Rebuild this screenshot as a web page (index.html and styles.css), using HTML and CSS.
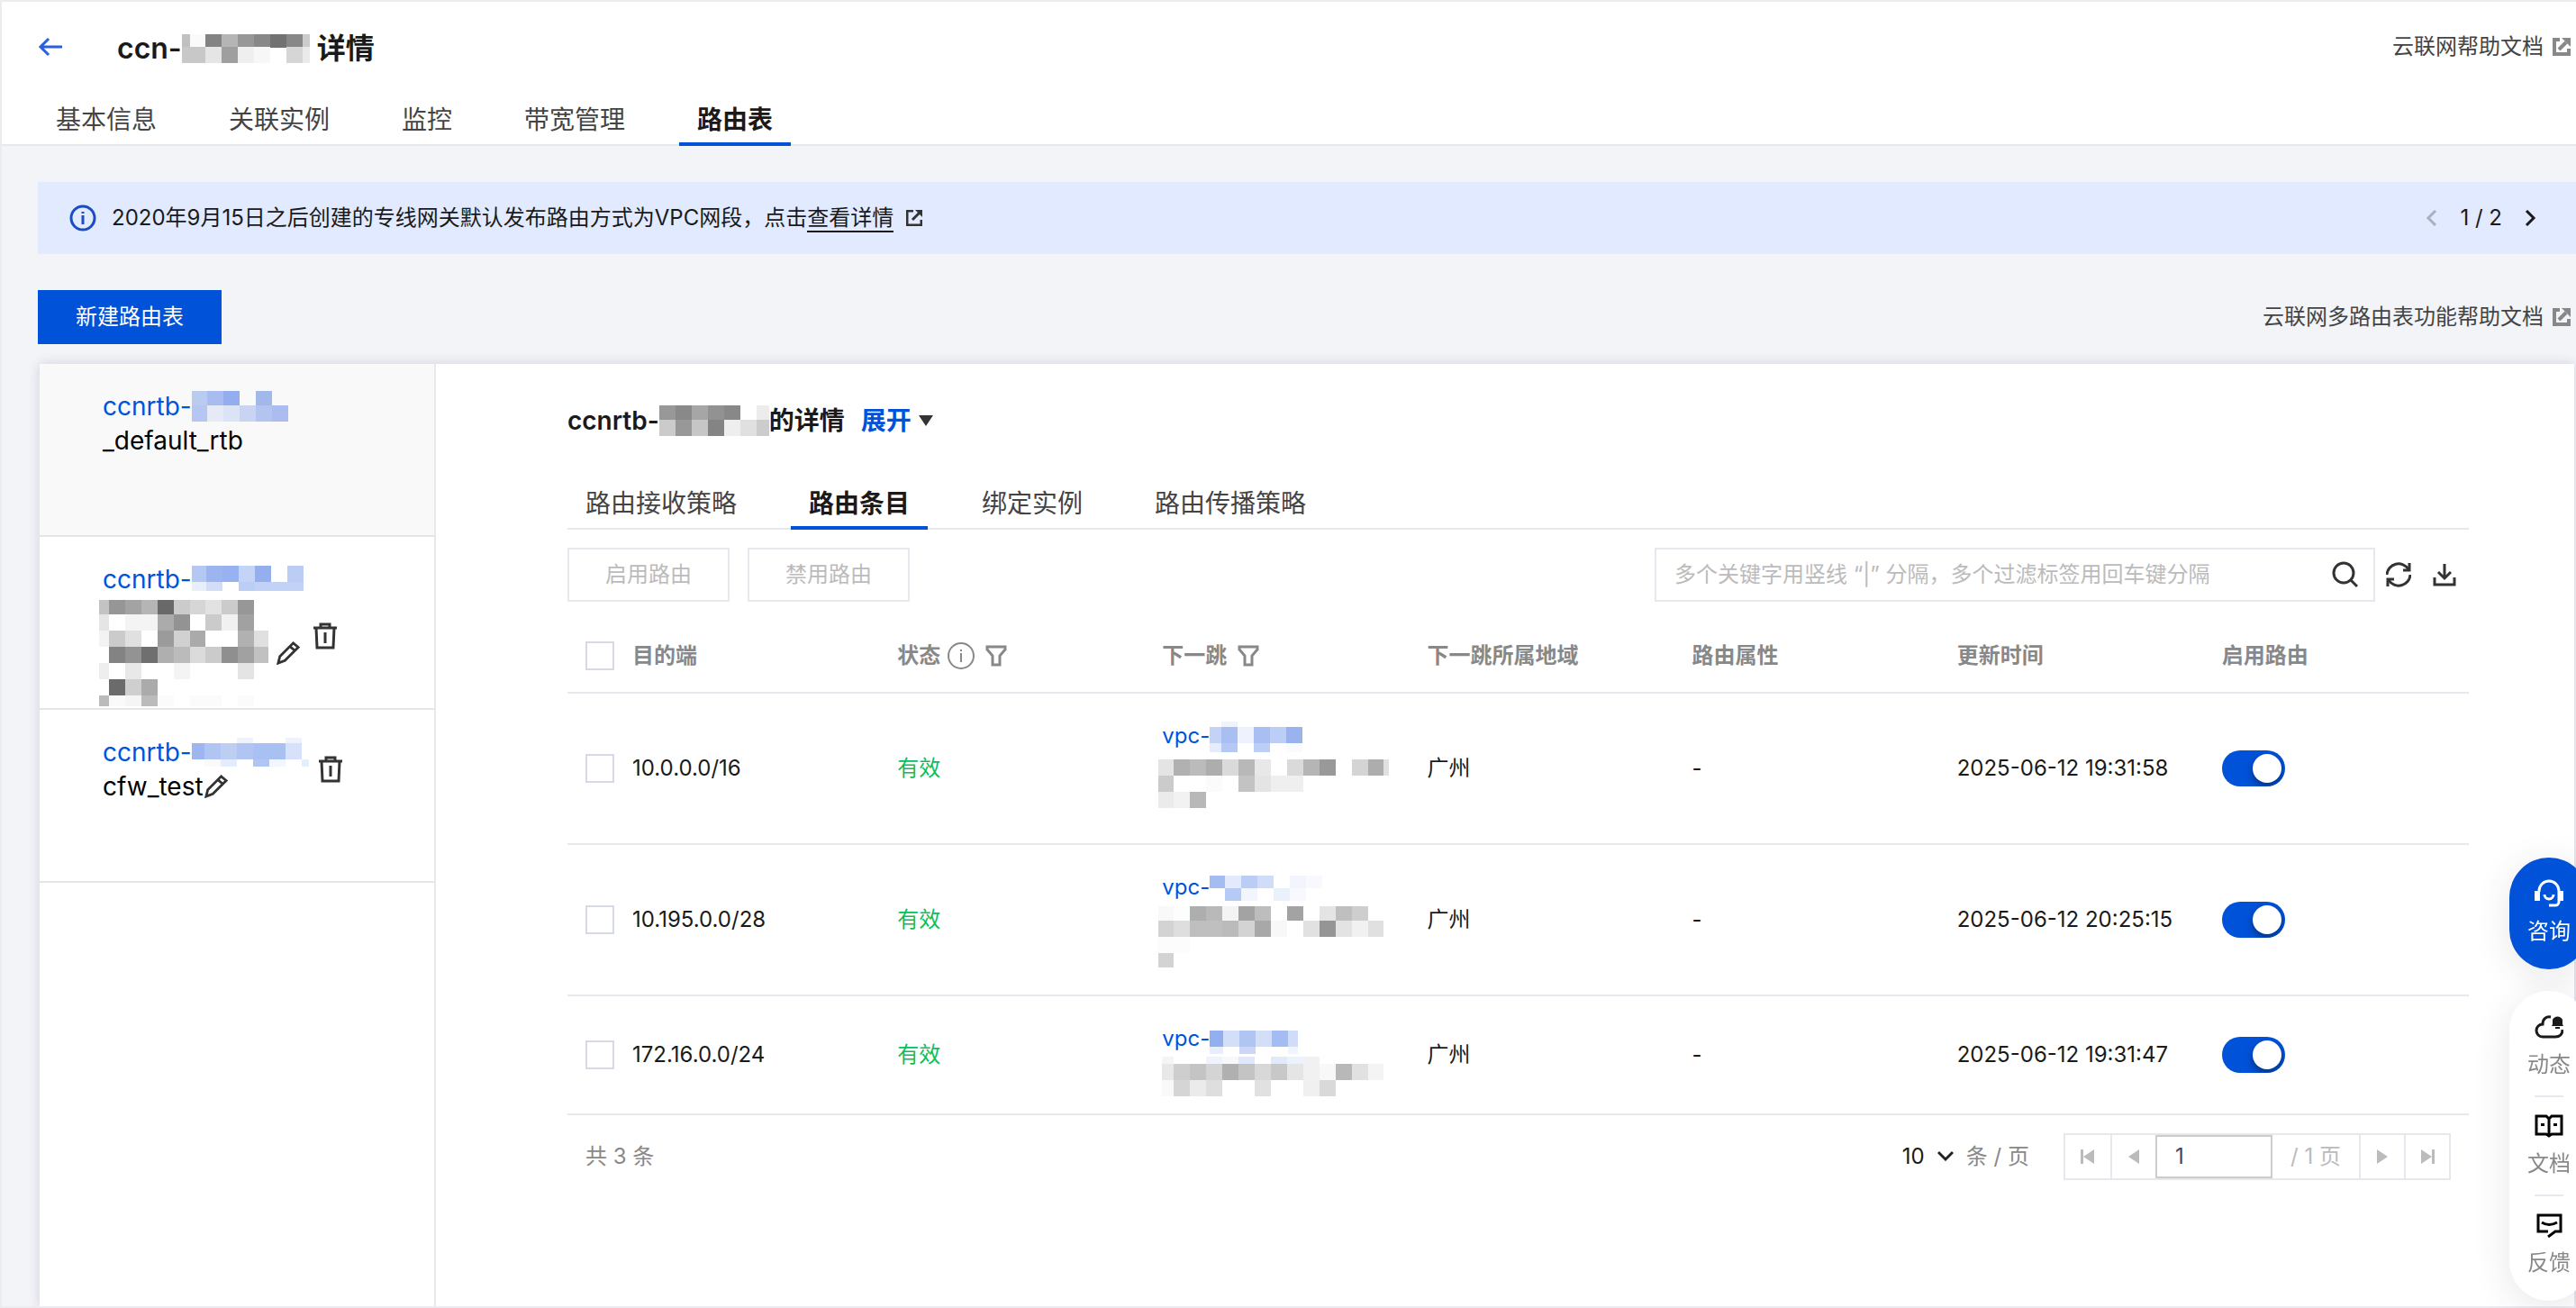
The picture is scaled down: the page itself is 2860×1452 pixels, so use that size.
FILE: index.html
```html
<!DOCTYPE html>
<html lang="zh-CN">
<head>
    <meta charset="UTF-8">
    <meta name="viewport" content="width=device-width, initial-scale=1.0">
    <title>云联网 - 路由表</title>
    <link rel="stylesheet" href="styles.css">
</head>
<body>
    <!-- Shared icons -->
    <svg class="sprite" aria-hidden="true">
        <symbol id="icon-external" viewBox="0 0 20 20">
            <path d="M8 2H2v16h16v-6" fill="none" stroke="currentColor" stroke-width="4"/>
            <path d="M7 13l8-8" fill="none" stroke="currentColor" stroke-width="4"/>
            <path d="M10 0h10v10z" fill="currentColor"/>
        </symbol>
        <symbol id="icon-filter" viewBox="0 0 24 24">
            <path d="M2 2h20v3l-6 7v10H8V12L2 5z" fill="none" stroke="currentColor" stroke-width="3"/>
        </symbol>
        <symbol id="icon-edit" viewBox="0 0 28 28">
            <path d="M2 26l2-8L20 2l6 5L10 23zM16 6l6 5" fill="none" stroke="currentColor" stroke-width="3"/>
        </symbol>
        <symbol id="icon-delete" viewBox="0 0 28 30">
            <path d="M1 6h26M9 6V2h10v4M4 6l1 22h18l1-22M14 11v12" fill="none" stroke="currentColor" stroke-width="3"/>
        </symbol>
    </svg>

    <header class="header">
        <div class="header-top">
            <a class="back" href="#" aria-label="返回">
                <svg width="28" height="22" viewBox="0 0 28 22"><path d="M27 11H3M12 2l-9 9 9 9" fill="none" stroke="currentColor" stroke-width="3"/></svg>
            </a>
            <h1>ccn-<svg class="mosaic" width="142" height="34">
                <g stroke-width="15"><path stroke="#c0c0c0" d="M0 8h9"/><path stroke="#fafafa" d="M9 8h17"/><path stroke="#838383" d="M26 8h18"/><path stroke="#b5b5b5" d="M44 8h18"/><path stroke="#979797" d="M62 8h18"/><path stroke="#888" d="M80 8h18"/><path stroke="#727272" d="M98 8h18"/><path stroke="#888" d="M116 8h18"/><path stroke="#ccc" d="M134 8h8"/></g>
                <g stroke-width="18"><path stroke="#c8c8c8" d="M0 24h26"/><path stroke="#e5e5e5" d="M26 24h18"/><path stroke="#9f9f9f" d="M44 24h18"/><path stroke="#efefef" d="M62 24h18"/><path stroke="#f7f7f7" d="M80 24h18"/><path stroke="#d6d6d6" d="M116 24h18"/><path stroke="#eaeaea" d="M134 24h8"/></g>
            </svg> 详情</h1>
            <a class="help-link" href="#">云联网帮助文档<svg width="20" height="20"><use href="#icon-external"/></svg></a>
        </div>
        <nav class="tabs">
            <a class="tab" href="#">基本信息</a>
            <a class="tab" href="#">关联实例</a>
            <a class="tab" href="#">监控</a>
            <a class="tab" href="#">带宽管理</a>
            <a class="tab active" href="#">路由表</a>
        </nav>
    </header>

    <main class="content">
        <div class="alert">
            <svg class="alert-icon" width="30" height="30" viewBox="0 0 30 30"><circle cx="15" cy="15" r="13" fill="none" stroke="currentColor" stroke-width="3"/><path d="M15 12v10M15 8v2" stroke="currentColor" stroke-width="3"/></svg>
            <p>2020年9月15日之后创建的专线网关默认发布路由方式为VPC网段，点击<a href="#">查看详情</a></p>
            <svg class="alert-external" width="18" height="18" viewBox="0 0 18 18"><path d="M8 1H1v16h16v-6M7 11l8-8" fill="none" stroke="currentColor" stroke-width="3"/><path d="M10 0h8v8z" fill="currentColor"/></svg>
            <div class="alert-pager">
                <button type="button" aria-label="上一条" disabled><svg width="14" height="18" viewBox="0 0 14 18"><path d="M11 1L3 9l8 8" fill="none" stroke="currentColor" stroke-width="3"/></svg></button>
                <span>1 / 2</span>
                <button type="button" aria-label="下一条"><svg width="14" height="18" viewBox="0 0 14 18"><path d="M3 1l8 8-8 8" fill="none" stroke="currentColor" stroke-width="3"/></svg></button>
            </div>
        </div>

        <div class="actions">
            <button type="button" class="btn-primary">新建路由表</button>
            <a class="help-link" href="#">云联网多路由表功能帮助文档<svg width="20" height="20"><use href="#icon-external"/></svg></a>
        </div>

        <div class="panel">
            <!-- Route table list -->
            <ul class="rtb-list">
                <li class="rtb-item active">
                    <div class="rtb-row">
                        <div class="rtb-info">
                            <a class="rtb-line" href="#">ccnrtb-<svg class="mosaic" width="107" height="38">
                                <g stroke-width="16"><path stroke="#b9cbef" d="M0 10h17"/><path stroke="#a9bcf0" d="M17 10h18"/><path stroke="#94adee" d="M35 10h18"/><path stroke="#a1b9ea" d="M71 10h18"/></g>
                                <g stroke-width="18"><path stroke="#b5c6f2" d="M0 27h17"/><path stroke="#e5eaf6" d="M17 27h18"/><path stroke="#dbe3f6" d="M35 27h18"/><path stroke="#c9d4f2" d="M53 27h18"/><path stroke="#b3c4f0" d="M71 27h18"/><path stroke="#abbcf0" d="M89 27h18"/></g>
                            </svg></a>
                            <div class="rtb-line">_default_rtb</div>
                        </div>
                    </div>
                </li>
                <li class="rtb-item">
                    <div class="rtb-row">
                        <div class="rtb-info">
                            <a class="rtb-line" href="#">ccnrtb-<svg class="mosaic" width="124" height="38">
                                <g stroke-width="18"><path stroke="#b5c8f4" d="M0 13h16"/><path stroke="#9cb4f0" d="M16 13h18"/><path stroke="#98b1f0" d="M34 13h18"/><path stroke="#c4d4f6" d="M52 13h18"/><path stroke="#94aeee" d="M70 13h18"/><path stroke="#bccdf5" d="M106 13h18"/></g>
                                <g stroke-width="10"><path stroke="#e8effc" d="M0 27h16"/><path stroke="#d3ddf8" d="M16 27h18"/><path stroke="#bccdf6" d="M52 27h18"/><path stroke="#c2d1f6" d="M70 27h54"/></g>
                            </svg></a>
                            <div class="rtb-name">
                                <svg class="mosaic outdent" width="188" height="126">
                                    <g stroke-width="16"><path stroke="#c3c3c3" d="M0 12h11"/><path stroke="#969696" d="M11 12h18"/><path stroke="#a3a3a3" d="M29 12h18"/><path stroke="#b5b5b5" d="M47 12h18"/><path stroke="#696969" d="M65 12h18"/><path stroke="#cbcbcb" d="M83 12h18"/><path stroke="#d6d6d6" d="M101 12h17"/><path stroke="#e2e2e2" d="M118 12h18"/><path stroke="#cbcbcb" d="M136 12h18"/><path stroke="#979797" d="M154 12h18"/></g>
                                    <g stroke-width="18"><path stroke="#e5e5e5" d="M0 29h11"/><path stroke="#f4f4f4" d="M29 29h36"/><path stroke="#ababab" d="M65 29h18"/><path stroke="#939393" d="M83 29h18"/><path stroke="#cbcbcb" d="M118 29h18"/><path stroke="#f1f1f1" d="M136 29h18"/><path stroke="#a1a1a1" d="M154 29h18"/>
                                    <path stroke="#f3f3f3" d="M0 47h11"/><path stroke="#cbcbcb" d="M11 47h18"/><path stroke="#e0e0e0" d="M29 47h18"/><path stroke="#9b9b9b" d="M65 47h18"/><path stroke="#d1d1d1" d="M83 47h18"/><path stroke="#aaa" d="M101 47h17"/><path stroke="#b1b1b1" d="M154 47h18"/><path stroke="#e0e0e0" d="M172 47h16"/>
                                    <path stroke="#838383" d="M11 65h18"/><path stroke="#939393" d="M29 65h18"/><path stroke="#6f6f6f" d="M47 65h18"/><path stroke="#afafaf" d="M65 65h18"/><path stroke="#bbb" d="M83 65h18"/><path stroke="#dbdbdb" d="M101 65h17"/><path stroke="#cbcbcb" d="M118 65h18"/><path stroke="#8f8f8f" d="M136 65h18"/><path stroke="#a1a1a1" d="M154 65h18"/><path stroke="#c1c1c1" d="M172 65h16"/>
                                    <path stroke="#eee" d="M0 83h11"/><path stroke="#e8e8e8" d="M29 83h18"/><path stroke="#f4f4f4" d="M83 83h18"/><path stroke="#e4e4e4" d="M154 83h18"/>
                                    <path stroke="#6b6b6b" d="M11 101h18"/><path stroke="#cfcfcf" d="M29 101h18"/><path stroke="#ababab" d="M47 101h18"/></g>
                                    <g stroke-width="12"><path stroke="#bbb" d="M0 116h11"/><path stroke="#fafafa" d="M11 116h18"/><path stroke="#f5f5f5" d="M29 116h18"/><path stroke="#bbb" d="M47 116h18"/><path stroke="#fbfbfb" d="M65 116h18M101 116h35M154 116h18"/></g>
                                </svg>
                                <button type="button" class="icon-btn" aria-label="编辑"><svg width="28" height="26"><use href="#icon-edit"/></svg></button>
                            </div>
                        </div>
                        <button type="button" class="icon-btn" aria-label="删除"><svg width="28" height="30"><use href="#icon-delete"/></svg></button>
                    </div>
                </li>
                <li class="rtb-item">
                    <div class="rtb-row">
                        <div class="rtb-info">
                            <a class="rtb-line" href="#">ccnrtb-<svg class="mosaic" width="130" height="38">
                                <g stroke-width="6"><path stroke="#edf2fd" d="M50 6h18M104 6h18"/></g>
                                <g stroke-width="18"><path stroke="#9db6f0" d="M0 18h14"/><path stroke="#b1c5f3" d="M14 18h18"/><path stroke="#bdcef3" d="M32 18h18"/><path stroke="#b1c5f3" d="M50 18h18"/><path stroke="#a9c0f2" d="M68 18h36"/><path stroke="#d8e1fa" d="M104 18h18"/></g>
                                <g stroke-width="8"><path stroke="#fafafa" d="M14 31h18"/><path stroke="#e5ecfd" d="M32 31h18"/><path stroke="#b1c5f3" d="M68 31h18"/><path stroke="#f2f6fe" d="M86 31h18"/><path stroke="#e5eefc" d="M122 31h8"/></g>
                            </svg></a>
                            <div class="rtb-line">cfw_test<button type="button" class="icon-btn" aria-label="编辑"><svg width="28" height="26"><use href="#icon-edit"/></svg></button></div>
                        </div>
                        <button type="button" class="icon-btn" aria-label="删除"><svg width="28" height="30"><use href="#icon-delete"/></svg></button>
                    </div>
                </li>
            </ul>

            <section class="detail">
                <h2>ccnrtb-<svg class="mosaic" width="122" height="34">
                    <g stroke-width="17"><path stroke="#989898" d="M0 8h18"/><path stroke="#898989" d="M18 8h18"/><path stroke="#a6a6a6" d="M36 8h18"/><path stroke="#929292" d="M54 8h18"/><path stroke="#888" d="M72 8h18"/><path stroke="#ececec" d="M108 8h14"/></g>
                    <g stroke-width="18"><path stroke="#cbcbcb" d="M0 25h18"/><path stroke="#989898" d="M18 25h18"/><path stroke="#c6c6c6" d="M36 25h18"/><path stroke="#848484" d="M54 25h18"/><path stroke="#eee" d="M72 25h18"/><path stroke="#e0e0e0" d="M90 25h18"/><path stroke="#ccc" d="M108 25h14"/></g>
                </svg>的详情<button type="button" class="expand">展开<svg width="16" height="12"><path d="M0 0h16l-8 12z" fill="#333"/></svg></button></h2>

                <nav class="tabs detail-tabs">
                    <a class="tab" href="#">路由接收策略</a>
                    <a class="tab active" href="#">路由条目</a>
                    <a class="tab" href="#">绑定实例</a>
                    <a class="tab" href="#">路由传播策略</a>
                </nav>

                <div class="toolbar">
                    <button type="button" class="btn" disabled>启用路由</button>
                    <button type="button" class="btn" disabled>禁用路由</button>
                    <div class="search">
                        <input type="text" aria-label="搜索路由" placeholder="多个关键字用竖线 “|” 分隔，多个过滤标签用回车键分隔">
                        <button type="button" class="icon-btn" aria-label="搜索"><svg width="30" height="30" viewBox="0 0 30 30"><circle cx="13" cy="13" r="11" fill="none" stroke="currentColor" stroke-width="3"/><path d="M20 20l8 8" stroke="currentColor" stroke-width="3"/></svg></button>
                    </div>
                    <button type="button" class="icon-btn refresh" aria-label="刷新"><svg width="28" height="28" viewBox="0 0 28 28"><path d="M1 14A13 13 0 0 1 25 8M27 14A13 13 0 0 1 3 20" fill="none" stroke="currentColor" stroke-width="3"/><path d="M26 1v8h-7M2 27v-8h7" fill="none" stroke="currentColor" stroke-width="3"/></svg></button>
                    <button type="button" class="icon-btn download" aria-label="下载"><svg width="26" height="26" viewBox="0 0 26 26"><path d="M2 16v8h22v-8" fill="none" stroke="currentColor" stroke-width="3"/><path d="M13 1v15M6 10l7 7 7-7" fill="none" stroke="currentColor" stroke-width="3"/></svg></button>
                </div>

                <table class="route-table">
                    <thead>
                        <tr>
                            <th class="check"><input type="checkbox" aria-label="全选"></th>
                            <th>目的端</th>
                            <th><span class="th-label">状态<svg class="th-info" width="30" height="30" viewBox="0 0 30 30"><circle cx="15" cy="15" r="14" fill="none" stroke="currentColor" stroke-width="2"/><path d="M15 12v10M15 8v2" stroke="currentColor" stroke-width="2"/></svg><svg width="24" height="24"><use href="#icon-filter"/></svg></span></th>
                            <th><span class="th-label">下一跳<svg width="24" height="24"><use href="#icon-filter"/></svg></span></th>
                            <th>下一跳所属地域</th>
                            <th>路由属性</th>
                            <th>更新时间</th>
                            <th>启用路由</th>
                        </tr>
                    </thead>
                    <tbody>
                        <tr>
                            <td class="check"><input type="checkbox" aria-label="选择 10.0.0.0/16"></td>
                            <td>10.0.0.0/16</td>
                            <td class="valid">有效</td>
                            <td>
                                <a class="hop" href="#">vpc-<svg class="mosaic" width="103" height="36">
                                    <g stroke-width="6"><path stroke="#eef3fd" d="M13 5h18"/></g>
                                    <g stroke-width="18"><path stroke="#c2d3f6" d="M0 17h13"/><path stroke="#a9bff2" d="M13 17h18"/><path stroke="#edf2fd" d="M31 17h18"/><path stroke="#a9bff2" d="M49 17h18"/><path stroke="#bccef6" d="M67 17h18"/><path stroke="#9ab3ee" d="M85 17h18"/></g>
                                    <g stroke-width="10"><path stroke="#e5ecfc" d="M0 31h13"/><path stroke="#b5c8f4" d="M13 31h18"/><path stroke="#bccef6" d="M49 31h18"/><path stroke="#fafbfe" d="M85 31h18"/></g>
                                </svg></a>
                                <svg class="mosaic outdent" width="256" height="72">
                                    <g stroke-width="18"><path stroke="#e4e4e4" d="M0 17h17"/><path stroke="#b1b1b1" d="M17 17h18"/><path stroke="#bbb" d="M35 17h18"/><path stroke="#adadad" d="M53 17h18"/><path stroke="#dadada" d="M71 17h18"/><path stroke="#b8b8b8" d="M89 17h18"/><path stroke="#e8e8e8" d="M107 17h18"/><path stroke="#dadada" d="M143 17h18"/><path stroke="#b5b5b5" d="M161 17h18"/><path stroke="#999" d="M179 17h18"/><path stroke="#d4d4d4" d="M215 17h18"/><path stroke="#adadad" d="M233 17h17"/><path stroke="#e0e0e0" d="M250 17h6"/>
                                    <path stroke="#cbcbcb" d="M0 35h17"/><path stroke="#fbfbfb" d="M53 35h18"/><path stroke="#c3c3c3" d="M89 35h18"/><path stroke="#e4e4e4" d="M107 35h18"/><path stroke="#efefef" d="M125 35h36"/>
                                    <path stroke="#ebebeb" d="M0 53h17"/><path stroke="#f2f2f2" d="M17 53h18"/><path stroke="#b8b8b8" d="M35 53h18"/></g>
                                </svg>
                            </td>
                            <td>广州</td>
                            <td>-</td>
                            <td>2025-06-12 19:31:58</td>
                            <td><input type="checkbox" class="switch" aria-label="启用 10.0.0.0/16" checked></td>
                        </tr>
                        <tr>
                            <td class="check"><input type="checkbox" aria-label="选择 10.195.0.0/28"></td>
                            <td>10.195.0.0/28</td>
                            <td class="valid">有效</td>
                            <td>
                                <a class="hop" href="#">vpc-<svg class="mosaic" width="125" height="36">
                                    <g stroke-width="14"><path stroke="#a5bcf2" d="M0 12h17"/><path stroke="#e3eafc" d="M17 12h18"/><path stroke="#bacdf5" d="M35 12h18"/><path stroke="#d1ddf8" d="M53 12h18"/><path stroke="#f2f5fe" d="M89 12h18"/><path stroke="#f8f9fe" d="M107 12h18"/>
                                    <path stroke="#b5caf4" d="M17 26h18"/><path stroke="#f0f5fe" d="M35 26h18"/><path stroke="#ebf0fd" d="M71 26h18"/><path stroke="#f8f9fe" d="M89 26h18"/></g>
                                </svg></a>
                                <svg class="mosaic outdent" width="256" height="72">
                                    <g stroke-width="16"><path stroke="#f9f9f9" d="M0 11h17"/><path stroke="#fcfefe" d="M17 11h18"/><path stroke="#aeaeae" d="M35 11h18"/><path stroke="#b9b9b9" d="M53 11h18"/><path stroke="#f4f4f4" d="M71 11h18"/><path stroke="#a3a3a3" d="M89 11h18"/><path stroke="#bdbdbd" d="M107 11h18"/><path stroke="#a3a3a3" d="M143 11h18"/><path stroke="#e4e4e4" d="M179 11h18"/><path stroke="#bfbfbf" d="M197 11h18"/><path stroke="#cecece" d="M215 11h18"/></g>
                                    <g stroke-width="18"><path stroke="#d3d3d3" d="M0 28h17"/><path stroke="#dedede" d="M17 28h18"/><path stroke="#bfbfbf" d="M35 28h36"/><path stroke="#bbb" d="M71 28h18"/><path stroke="#d3d3d3" d="M89 28h18"/><path stroke="#a8a8a8" d="M107 28h18"/><path stroke="#f8f8f8" d="M125 28h18"/><path stroke="#e1e1e1" d="M161 28h18"/><path stroke="#959595" d="M179 28h18"/><path stroke="#e3e3e3" d="M197 28h18"/><path stroke="#f1f1f1" d="M215 28h18"/><path stroke="#e0e0e0" d="M233 28h17"/>
                                    <path stroke="#fcfcfc" d="M0 46h35"/></g>
                                    <g stroke-width="16"><path stroke="#d3d3d3" d="M0 63h17"/></g>
                                </svg>
                            </td>
                            <td>广州</td>
                            <td>-</td>
                            <td>2025-06-12 20:25:15</td>
                            <td><input type="checkbox" class="switch" aria-label="启用 10.195.0.0/28" checked></td>
                        </tr>
                        <tr>
                            <td class="check"><input type="checkbox" aria-label="选择 172.16.0.0/24"></td>
                            <td>172.16.0.0/24</td>
                            <td class="valid">有效</td>
                            <td>
                                <a class="hop" href="#">vpc-<svg class="mosaic" width="98" height="36">
                                    <g stroke-width="18"><path stroke="#94aff0" d="M0 18h15"/><path stroke="#d3def8" d="M15 18h18"/><path stroke="#b1c5f3" d="M33 18h18"/><path stroke="#d3def8" d="M51 18h18"/><path stroke="#a5bcf2" d="M69 18h18"/><path stroke="#d1ddf8" d="M87 18h11"/></g>
                                    <g stroke-width="8"><path stroke="#e8effc" d="M0 31h15"/><path stroke="#ccd7f8" d="M33 31h18"/><path stroke="#f0f4fd" d="M87 31h11"/></g>
                                </svg></a>
                                <svg class="mosaic outdent" width="256" height="36">
                                    <g stroke-width="8"><path stroke="#f5f5f5" d="M4 6h13"/><path stroke="#eef3fd" d="M53 6h18"/><path stroke="#f8f8fa" d="M71 6h18"/><path stroke="#e1e7fc" d="M89 6h18"/><path stroke="#e1eaf8" d="M125 6h18"/><path stroke="#ebf2fc" d="M143 6h18"/><path stroke="#f1f1f1" d="M161 6h18"/></g>
                                    <g stroke-width="18"><path stroke="#e8e8e8" d="M4 19h13"/><path stroke="#cecece" d="M17 19h18"/><path stroke="#c4c4c4" d="M35 19h18"/><path stroke="#d4d4d4" d="M53 19h18"/><path stroke="#b0b0b0" d="M71 19h18"/><path stroke="#c4c4c4" d="M89 19h18"/><path stroke="#d8d8d8" d="M107 19h18"/><path stroke="#c8c8c8" d="M125 19h18"/><path stroke="#e5e5e5" d="M143 19h18"/><path stroke="#f1f1f1" d="M161 19h18"/><path stroke="#f8f8f8" d="M179 19h18"/><path stroke="#b8b8b8" d="M197 19h18"/><path stroke="#e1e1e1" d="M215 19h18"/><path stroke="#f4f4f4" d="M233 19h17"/>
                                    <path stroke="#f9f9f9" d="M4 37h13"/><path stroke="#d5d5d5" d="M17 37h18"/><path stroke="#ebebeb" d="M35 37h18"/><path stroke="#dedede" d="M53 37h18"/><path stroke="#e1e1e1" d="M107 37h18"/><path stroke="#f0f0f0" d="M161 37h18"/><path stroke="#d9d9d9" d="M179 37h18"/></g>
                                </svg>
                            </td>
                            <td>广州</td>
                            <td>-</td>
                            <td>2025-06-12 19:31:47</td>
                            <td><input type="checkbox" class="switch" aria-label="启用 172.16.0.0/24" checked></td>
                        </tr>
                    </tbody>
                </table>

                <div class="table-footer">
                    <span class="total">共 3 条</span>
                    <label class="page-size">
                        <select><option>10</option></select>
                        <svg width="18" height="14" viewBox="0 0 18 14"><path d="M1 2l8 8 8-8" fill="none" stroke="#222" stroke-width="3"/></svg>
                        <span>条 / 页</span>
                    </label>
                    <div class="pagination">
                        <button type="button" aria-label="首页" disabled><svg width="16" height="16" viewBox="0 0 16 16"><path d="M0 0h3v16H0zM15 0v16L3 8z" fill="currentColor"/></svg></button>
                        <button type="button" aria-label="上一页" disabled><svg width="16" height="16" viewBox="0 0 16 16"><path d="M14 0v16L2 8z" fill="currentColor"/></svg></button>
                        <input type="text" aria-label="页码" value="1">
                        <span>/ 1 页</span>
                        <button type="button" aria-label="下一页" disabled><svg width="16" height="16" viewBox="0 0 16 16"><path d="M2 0v16l12-8z" fill="currentColor"/></svg></button>
                        <button type="button" aria-label="末页" disabled><svg width="16" height="16" viewBox="0 0 16 16"><path d="M13 0h3v16h-3zM1 0v16l12-8z" fill="currentColor"/></svg></button>
                    </div>
                </div>
            </section>
        </div>
    </main>

    <!-- Floating help -->
    <aside class="float-bar">
        <a class="float-chat" href="#">
            <svg width="32" height="32" viewBox="0 0 32 32"><path d="M5 14v-1a11 11 0 0 1 22 0v12a4 4 0 0 1-4 4h-7" fill="none" stroke="#fff" stroke-width="3"/><path d="M0 13h6v11H0zM26 13h6v11h-6z" fill="#fff"/><path d="M11 17a5 5 0 0 0 10 0" fill="none" stroke="#fff" stroke-width="3"/></svg>
            咨询
        </a>
        <div class="float-menu">
            <a href="#">
                <svg width="32" height="28" viewBox="0 0 32 28"><path d="M18 3C13 2 9 5 9 11c-4 0-7 3-7 7s3 7 7 7h14c5 0 8-3 8-8" fill="none" stroke="#1a1a1a" stroke-width="3"/><path d="M20 11V6a6 6 0 0 1 11 0v5l1 2H19zM23 14h5v2h-5z" fill="#1a1a1a"/></svg>
                动态
            </a>
            <a href="#">
                <svg width="32" height="28" viewBox="0 0 32 28"><path d="M16 6L13 3H2v20h11l3 2 3-2h11V3H19zM16 6v19" fill="none" stroke="#000" stroke-width="3"/><path d="M7 11h4v3H7zM21 11h4v3h-4z" fill="#000"/></svg>
                文档
            </a>
            <a href="#">
                <svg width="32" height="28" viewBox="0 0 32 28"><path d="M15 21H4V3h25v18h-6l-8 6" fill="none" stroke="#000" stroke-width="3"/><path d="M8 11q8 5 17 0" fill="none" stroke="#000" stroke-width="3"/></svg>
                反馈
            </a>
        </div>
    </aside>
</body>
</html>
```
FILE: styles.css
```css
* {
    box-sizing: border-box;
}

body {
    margin: 0;
    min-height: 100vh;
    display: flex;
    flex-direction: column;
    border: 2px solid #ebebf0;
    border-right: none;
    background-color: #f3f4f8;
    font-family: Inter, "Noto Sans CJK SC", sans-serif;
    font-size: 24px;
    line-height: 36px;
    color: #1a1a1a;
}

a {
    color: #0052d9;
    text-decoration: none;
}

button,
input,
select {
    font: inherit;
    color: inherit;
    margin: 0;
    padding: 0;
    border: none;
    border-radius: 0;
    background: none;
}

svg {
    display: block;
    flex: none;
}

.sprite {
    position: absolute;
    width: 0;
    height: 0;
}

/* Redacted text */
.mosaic {
    overflow: visible;
    shape-rendering: crispEdges;
}

.outdent {
    margin-left: -4px;
}

.icon-btn {
    display: flex;
    color: #333;
}

/* Header */
.header {
    background-color: #fff;
    border-bottom: 2px solid #e7e8ee;
}

.header-top {
    display: flex;
    align-items: center;
    height: 100px;
    padding: 0 6px 0 40px;
}

.back {
    color: #2860e1;
    margin-right: 60px;
}

h1 {
    display: flex;
    align-items: center;
    margin: 0;
    padding-top: 4px;
    font-size: 32px;
    font-weight: 600;
    white-space: pre;
}

.help-link {
    display: flex;
    align-items: center;
    gap: 10px;
    margin-left: auto;
    color: #444;
}

.help-link svg {
    color: #888;
}

.tabs {
    display: flex;
    gap: 40px;
    padding-left: 40px;
    margin-bottom: -2px;
}

.tab {
    height: 60px;
    padding: 0 20px;
    border-bottom: 4px solid transparent;
    font-size: 28px;
    line-height: 62px;
    color: #444;
}

.tab.active {
    border-color: #0052d9;
    font-weight: 700;
    color: #1a1a1a;
}

/* Notice */
.content {
    flex: 1;
    display: flex;
    flex-direction: column;
    padding: 40px 0 0 40px;
}

.alert {
    display: flex;
    align-items: center;
    height: 80px;
    padding: 0 44px 0 35px;
    background-color: #e1eaff;
}

.alert-icon {
    margin-right: 17px;
    color: #1c4cc4;
}

.alert p {
    margin: 0;
}

.alert p a {
    color: inherit;
    border-bottom: 2px solid #1a1a1a;
}

.alert-external {
    margin-left: 14px;
    color: #333;
}

.alert-pager {
    display: flex;
    align-items: center;
    gap: 24px;
    margin-left: auto;
}

.alert-pager button {
    display: flex;
}

.alert-pager button:disabled {
    color: #a9b0c0;
}

.actions {
    display: flex;
    align-items: center;
    padding: 40px 6px 20px 0;
}

.btn-primary {
    height: 60px;
    padding: 0 42px;
    background-color: #0052d9;
    color: #fff;
}

/* Main panel */
.panel {
    flex: 1;
    display: flex;
    margin: 2px 2px 0;
    background-color: #fff;
    box-shadow: 0 0 12px rgba(54, 58, 80, 0.18);
}

.rtb-list {
    width: 440px;
    margin: 0;
    padding: 0;
    list-style: none;
    border-right: 2px solid #e7e8ee;
}

.rtb-item {
    height: 192px;
    padding: 28px 0 0 70px;
    border-bottom: 2px solid #e5e5e5;
    font-size: 28px;
    line-height: 38px;
    color: #000;
}

.rtb-item.active {
    background-color: #f9f9f9;
}

.rtb-row,
.rtb-line,
.rtb-name {
    display: flex;
    align-items: center;
}

.rtb-row {
    gap: 10px;
}

.rtb-name {
    gap: 8px;
}

/* Route table detail */
.detail {
    flex: 1;
    padding: 44px 117px 0 146px;
}

h2 {
    display: flex;
    align-items: center;
    height: 38px;
    margin: 0;
    font-size: 28px;
    font-weight: 600;
}

.expand {
    display: flex;
    align-items: center;
    gap: 8px;
    margin-left: 18px;
    color: #0052d9;
}

.detail-tabs {
    margin: 42px 0 20px;
    padding-left: 0;
    height: 60px;
    border-bottom: 2px solid #e7e8ee;
}

.toolbar {
    display: flex;
    align-items: center;
}

.btn {
    width: 180px;
    height: 60px;
    margin-right: 20px;
    border: 2px solid #e7e8ee;
    color: #bbb;
}

.search {
    display: flex;
    align-items: center;
    width: 800px;
    height: 60px;
    margin-left: auto;
    padding: 0 16px 0 20px;
    border: 2px solid #e7e8ee;
}

.search input {
    flex: 1;
    outline: none;
}

.search input::placeholder {
    color: #bbb;
    opacity: 1;
}

.refresh {
    margin-left: 12px;
}

.download {
    margin: 0 14px 0 24px;
}

.route-table {
    width: 100%;
    margin-top: 20px;
    border-collapse: separate;
    border-spacing: 0;
    table-layout: fixed;
}

.route-table th {
    height: 82px;
    padding: 0 20px;
    border-bottom: 2px solid #e7e8ee;
    text-align: left;
    font-weight: 600;
    color: #888;
}

.route-table td {
    padding: 29px 20px;
    border-bottom: 2px solid #e7e8ee;
}

.route-table .check {
    width: 52px;
    padding-right: 0;
}

.check input {
    display: block;
    appearance: none;
    width: 32px;
    height: 32px;
    border: 2px solid #d5dae6;
    background-color: #fff;
}

.th-label {
    display: flex;
    align-items: center;
    gap: 12px;
}

.th-info {
    margin-left: -4px;
}

.route-table .valid {
    color: #0abf5b;
}

.hop {
    display: flex;
    align-items: center;
    height: 36px;
}

.switch {
    display: block;
    appearance: none;
    width: 70px;
    height: 40px;
    padding: 4px;
    border-radius: 20px;
    background-color: #0052d9;
    overflow: hidden;
}

.switch::before {
    content: "";
    display: block;
    width: 32px;
    height: 32px;
    margin-left: auto;
    border-radius: 50%;
    background-color: #fff;
    box-shadow: 0 4px 10px rgba(0, 0, 0, 0.4);
}

.table-footer {
    display: flex;
    align-items: center;
    padding: 20px 20px 0;
    color: #888;
}

.total {
    margin-right: auto;
}

.page-size {
    display: flex;
    align-items: center;
    gap: 14px;
}

.page-size select {
    appearance: none;
    color: #1a1a1a;
}

.pagination {
    display: flex;
    height: 52px;
    margin-left: 38px;
    border: 2px solid #e7e8ee;
    color: #bbb;
}

.pagination button {
    display: flex;
    align-items: center;
    justify-content: center;
    width: 50px;
    border-left: 2px solid #e7e8ee;
}

.pagination button:first-child {
    border-left: none;
}

.pagination input {
    width: 130px;
    padding-left: 20px;
    border: 2px solid #ccc;
    color: #3b4a6b;
}

.pagination span {
    width: 96px;
    text-align: center;
    line-height: 48px;
}

/* Floating help */
.float-bar {
    position: fixed;
    right: -14px;
    bottom: 8px;
    width: 88px;
}

.float-bar a {
    display: flex;
    flex-direction: column;
    align-items: center;
    color: #888;
}

.float-bar .float-chat {
    height: 124px;
    margin-bottom: 24px;
    padding-top: 24px;
    gap: 8px;
    border-radius: 44px;
    background-color: #0052d9;
    box-shadow: 0 8px 40px rgba(54, 58, 80, 0.12);
    color: #fff;
}

.float-menu {
    height: 344px;
    padding: 26px 28px;
    border-radius: 44px;
    background-color: #fff;
    box-shadow: 0 8px 40px rgba(54, 58, 80, 0.12);
}

.float-menu a {
    height: 110px;
    gap: 10px;
    white-space: nowrap;
}

.float-menu a:not(:last-child)::after {
    content: "";
    width: 32px;
    height: 2px;
    margin-top: 6px;
    background-color: #e7e8ee;
}
```
